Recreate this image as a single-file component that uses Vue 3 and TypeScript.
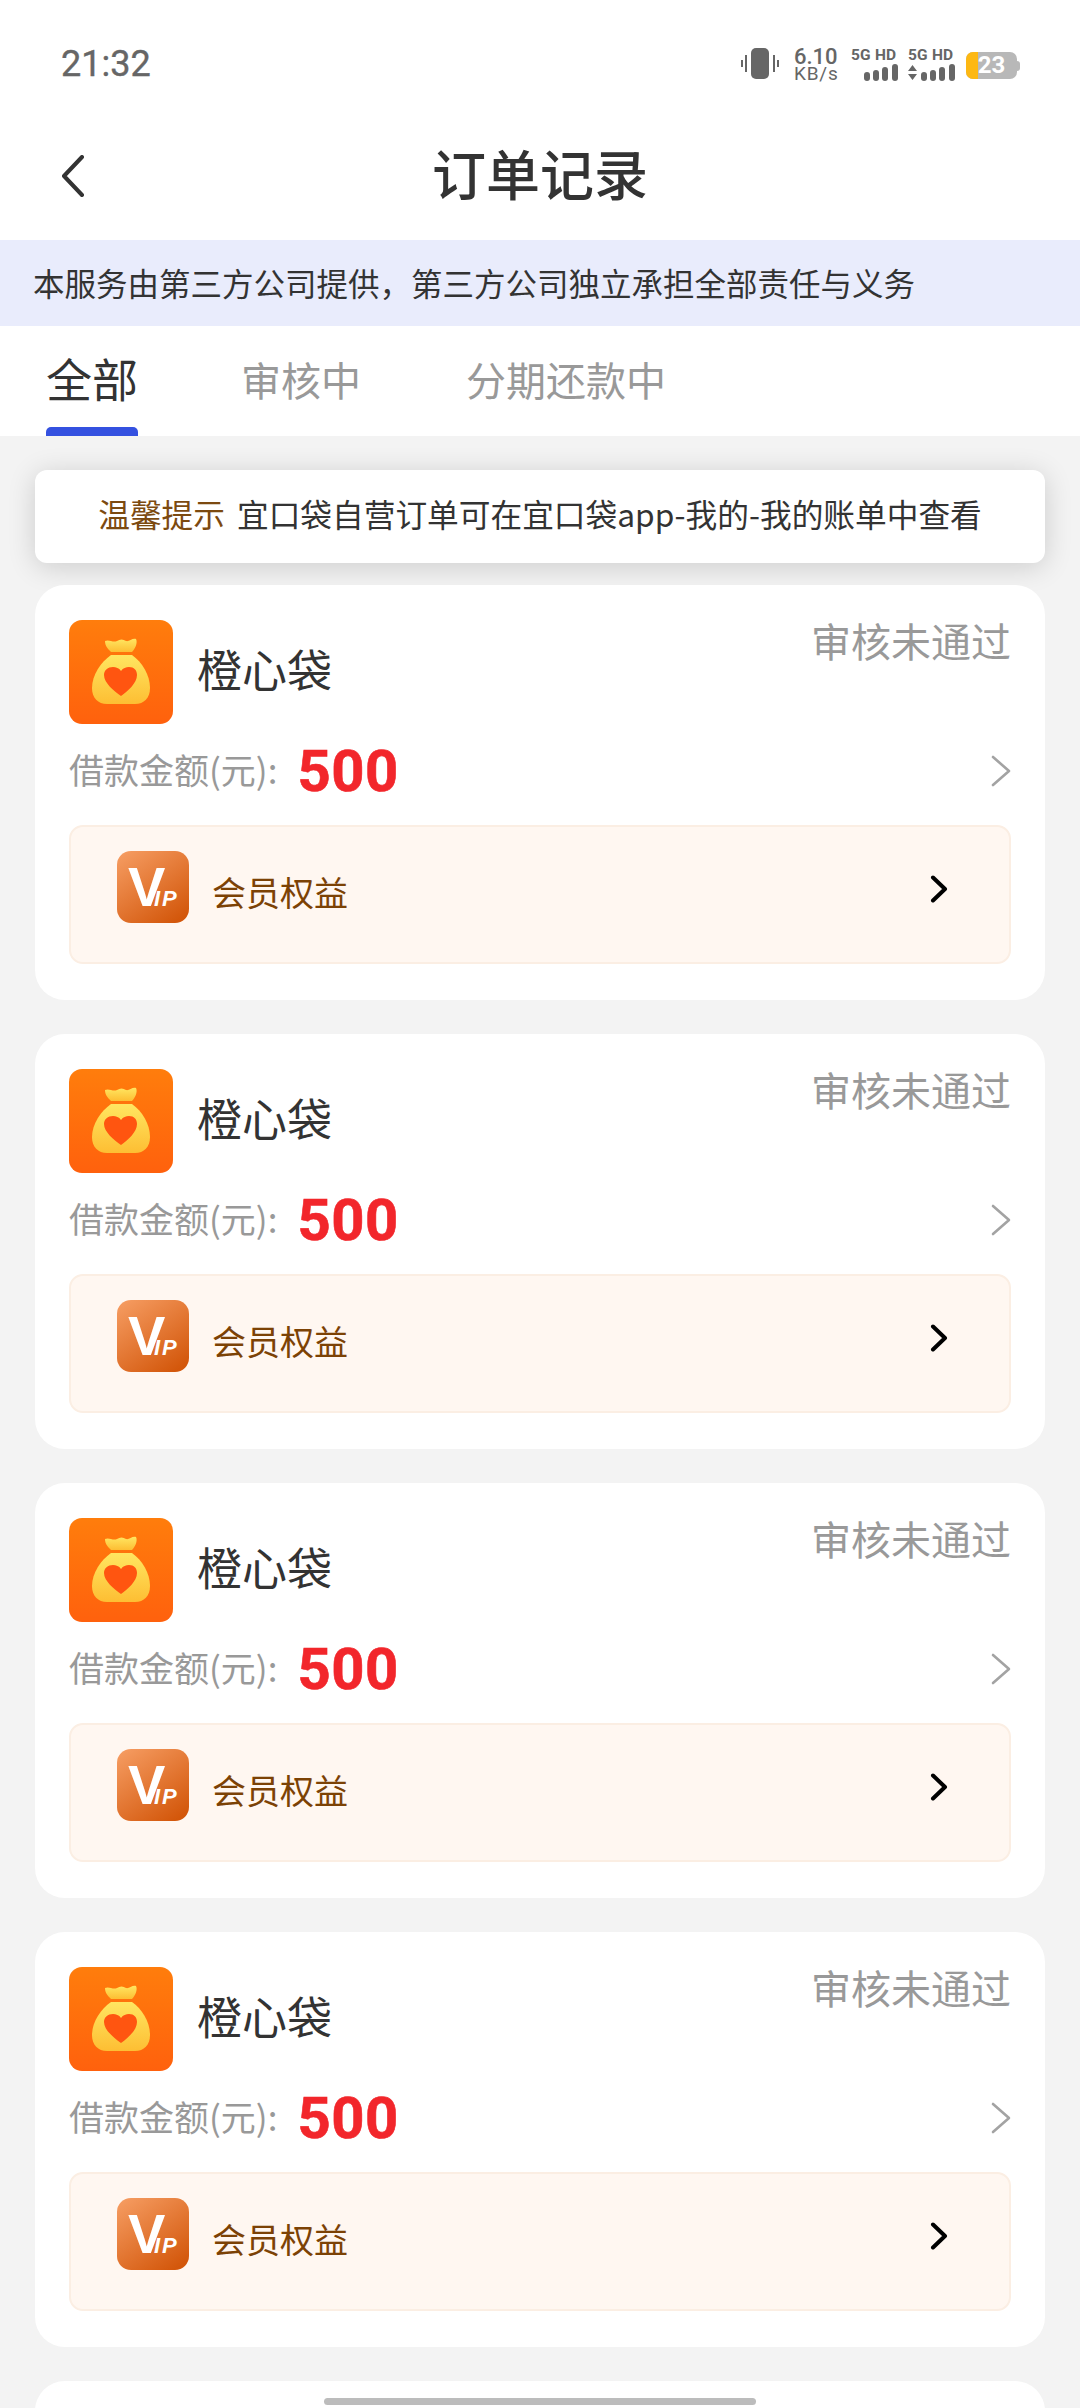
<script setup lang="ts">
const cards: number[] = [1, 2, 3, 4, 5]
</script>

<template>
  <div class="page">
    <div class="status">
      <span class="time">21:32</span>
      <div class="sys">
        <svg class="vib" width="38" height="34" viewBox="0 0 38 34">
          <rect x="10" y="0" width="18" height="31" rx="5" fill="#666" />
          <path d="M5 7v17M1 12v7M33 7v17M37 12v7" stroke="#666" stroke-width="2" fill="none" />
        </svg>
        <div class="speed"><span>6.10</span><span class="kb">KB/s</span></div>
        <div class="sim">
          <span class="hd">5G HD</span>
          <svg width="48" height="17" viewBox="0 0 48 17">
            <g fill="#666">
              <rect x="13" y="8" width="6" height="9" rx="3" />
              <rect x="22" y="6" width="6" height="11" rx="3" />
              <rect x="31" y="3" width="6" height="14" rx="3" />
              <rect x="41" y="0" width="6" height="17" rx="3" />
            </g>
          </svg>
        </div>
        <div class="sim">
          <span class="hd">5G HD</span>
          <svg width="48" height="17" viewBox="0 0 48 17">
            <g fill="#666">
              <path d="M0 7L4.500 1L9 7zM0 10L4.500 16L9 10z" />
              <rect x="13" y="8" width="6" height="9" rx="3" />
              <rect x="22" y="6" width="6" height="11" rx="3" />
              <rect x="31" y="3" width="6" height="14" rx="3" />
              <rect x="41" y="0" width="6" height="17" rx="3" />
            </g>
          </svg>
        </div>
        <div class="battery">
          <div class="batt-body"><i class="batt-fill"></i><span>23</span></div>
          <i class="batt-tip"></i>
        </div>
      </div>
    </div>

    <div class="nav">
      <svg class="back" width="24" height="42" viewBox="0 0 24 42">
        <path d="M21 2L3 21L21 40" fill="none" stroke="#333" stroke-width="4" stroke-linecap="round" stroke-linejoin="round" />
      </svg>
      <h1>订单记录</h1>
    </div>

    <div class="notice">本服务由第三方公司提供，第三方公司独立承担全部责任与义务</div>

    <div class="tabs">
      <div class="tab active">全部<i></i></div>
      <div class="tab">审核中</div>
      <div class="tab">分期还款中</div>
    </div>

    <div class="list">
      <div class="tip"><em>温馨提示</em><span>宜口袋自营订单可在宜口袋app-我的-我的账单中查看</span></div>

      <div v-for="c in cards" :key="c" class="card">
        <template v-if="c < 5">
          <div class="head">
            <svg class="logo" width="104" height="104" viewBox="0 0 104 104">
              <defs>
                <linearGradient :id="'bg' + c" x1="0" y1="0" x2="0" y2="1">
                  <stop offset="0" stop-color="#ff7d0c" />
                  <stop offset="1" stop-color="#ff610d" />
                </linearGradient>
                <linearGradient :id="'bag' + c" x1="0" y1="0" x2="0" y2="1">
                  <stop offset="0" stop-color="#ffe661" />
                  <stop offset="1" stop-color="#fdbe33" />
                </linearGradient>
              </defs>
              <rect width="104" height="104" rx="13" :fill="'url(#bg' + c + ')'" />
              <path d="M36 21C40 19 44 23 48 21C51 19 54 19 57 21C60 22 63 18 67 19C69 23 66 29 63 32H42C39 29 36 26 36 21Z" :fill="'url(#bag' + c + ')'" />
              <path d="M42 35H63C73 42 81 55 81 68C81 78 75 84 66 84H38C29 84 23 78 23 68C23 55 32 42 42 35Z" :fill="'url(#bag' + c + ')'" />
              <path d="M52 76C45 71 35 63 35 55C35 50 39 47 44 47C47 47 50 48 52 51C54 48 57 47 60 47C65 47 68 50 68 55C68 63 59 71 52 76Z" fill="#ff5510" />
            </svg>
            <span class="name">橙心袋</span>
            <span class="state">审核未通过</span>
          </div>
          <div class="amount">
            <span class="label">借款金额(元):</span>
            <span class="num">500</span>
            <svg class="more" width="20" height="32" viewBox="0 0 20 32">
              <path d="M2 2L18 16L2 30" fill="none" stroke="#a3a3a3" stroke-width="2.600" stroke-linecap="round" stroke-linejoin="round" />
            </svg>
          </div>
          <div class="benefit">
            <svg class="vip" width="72" height="72" viewBox="0 0 72 72">
              <defs>
                <linearGradient :id="'vip' + c" x1="0.100" y1="0" x2="0.800" y2="1">
                  <stop offset="0" stop-color="#f59b60" />
                  <stop offset="1" stop-color="#d3570b" />
                </linearGradient>
              </defs>
              <rect width="72" height="72" rx="14" :fill="'url(#vip' + c + ')'" />
              <text x="11" y="55" class="vip-v">V<tspan x="37" class="vip-ip">IP</tspan></text>
            </svg>
            <span class="benefit-text">会员权益</span>
            <svg class="go" width="18" height="28" viewBox="0 0 18 28">
              <path d="M3 2.500L15 14L3 25.500" fill="none" stroke="#000" stroke-width="4" stroke-linecap="round" stroke-linejoin="round" />
            </svg>
          </div>
        </template>
      </div>
    </div>

    <i class="home"></i>
  </div>
</template>

<style>
html, body { margin: 0; background: #f3f3f3; }
</style>

<style scoped>
.page {
  position: relative;
  width: 1080px;
  height: 2408px;
  overflow: hidden;
  background: #f3f3f3;
  font-family: "Noto Sans CJK SC", "Noto Sans", sans-serif;
}
.status {
  height: 120px;
  box-sizing: border-box;
  padding: 40px 60px 0 61px;
  background: #fff;
  display: flex;
  justify-content: space-between;
  align-items: flex-start;
}
.time {
  font: 400 36px/48px Roboto, sans-serif;
  color: #666;
  -webkit-text-stroke: 0.4px #666;
}
.sys {
  display: flex;
  align-items: flex-start;
  padding-top: 8px;
}
.speed {
  display: flex;
  flex-direction: column;
  margin-left: 15px;
  width: 57px;
  font: 500 22px/17px Roboto, sans-serif;
  color: #666;
}
.speed .kb { font-size: 19px; letter-spacing: 0.8px; font-weight: 400; }
.sim {
  width: 48px;
  margin-right: 9px;
  display: flex;
  flex-direction: column;
  gap: 2px;
}
.hd {
  font: 700 15.500px/14px Roboto, sans-serif;
  color: #666;
  white-space: nowrap;
  letter-spacing: 0.2px;
}
.battery {
  display: flex;
  align-items: center;
  margin: 4px 0 0 1px;
}
.batt-body {
  position: relative;
  width: 51px;
  height: 27px;
  border-radius: 7px;
  background: #b8b8b8;
  overflow: hidden;
  display: flex;
  align-items: center;
  justify-content: center;
}
.batt-fill {
  position: absolute;
  left: 0;
  top: 0;
  bottom: 0;
  width: 12px;
  background: #fdb813;
}
.batt-body span {
  position: relative;
  font: 700 24px/27px Roboto, sans-serif;
  color: #fff;
}
.batt-tip {
  width: 3px;
  height: 10px;
  border-radius: 0 3px 3px 0;
  background: #b8b8b8;
}
.nav {
  position: relative;
  height: 120px;
  background: #fff;
  display: flex;
  align-items: center;
  justify-content: center;
}
.back {
  position: absolute;
  left: 61px;
  top: 35px;
}
h1 {
  margin: 0 0 14px;
  font-size: 54px;
  line-height: 72px;
  font-weight: 500;
  color: #333;
}
.notice {
  height: 86px;
  box-sizing: border-box;
  padding-left: 33px;
  background: #e9ecfc;
  color: #333;
  font-size: 31.500px;
  line-height: 84px;
  white-space: nowrap;
}
.tabs {
  height: 110px;
  box-sizing: border-box;
  background: #fff;
  display: flex;
  padding: 26px 0 0 46px;
}
.tab {
  position: relative;
  height: 84px;
  margin-right: 104px;
  font-size: 40px;
  line-height: 54px;
  color: #999;
}
.tab:last-child { margin-left: 1px; }
.tab.active {
  font-size: 46px;
  line-height: 50px;
  color: #333;
  margin-right: 103px;
}
.tab.active i {
  position: absolute;
  left: 0;
  right: 0;
  bottom: 0;
  height: 9px;
  border-radius: 5px 5px 0 0;
  background: #3451e0;
}
.list {
  padding: 34px 35px 0;
  display: flex;
  flex-direction: column;
  gap: 34px;
}
.tip {
  height: 93px;
  box-sizing: border-box;
  padding-bottom: 8px;
  margin-bottom: -12px;
  flex-shrink: 0;
  background: #fff;
  border-radius: 12px;
  box-shadow: 0 4px 28px rgba(0, 0, 0, 0.16);
  display: flex;
  align-items: center;
  justify-content: center;
  gap: 12px;
  font-size: 31.700px;
  color: #333;
  white-space: nowrap;
}
.tip em { font-style: normal; color: #7c4a10; }
.card {
  flex-shrink: 0;
  height: 415px;
  box-sizing: border-box;
  padding: 35px 34px 0;
  background: #fff;
  border-radius: 30px;
}
.head {
  height: 104px;
  display: flex;
  align-items: center;
}
.logo { flex-shrink: 0; }
.name {
  margin: 0 0 8px 24px;
  font-size: 45px;
  color: #333;
}
.state {
  margin-left: auto;
  align-self: flex-start;
  font-size: 40px;
  line-height: 40px;
  color: #999;
}
.amount {
  height: 94px;
  display: flex;
  align-items: center;
  margin-bottom: 7px;
}
.label { font-size: 35px; color: #999; margin-bottom: 6px; }
.num {
  margin-left: 20px;
  font: 700 58px/94px Roboto, sans-serif;
  color: #f2262b;
  -webkit-text-stroke: 0.6px #f2262b;
  letter-spacing: 0.5px;
}
.more { margin-left: auto; }
.benefit {
  height: 139px;
  box-sizing: border-box;
  padding: 0 61px 0 46px;
  display: flex;
  align-items: center;
  background: #fff7f1;
  border: 2px solid #fbeee3;
  border-radius: 14px;
}
.vip { margin-top: -16px; flex-shrink: 0; }
.benefit-text {
  margin: 0 0 6px 23px;
  font-size: 34px;
  color: #7c4205;
}
.go { margin-left: auto; margin-top: -12px; }
.vip-v {
  font: 700 56px "Liberation Sans", sans-serif;
  fill: #fff;
}
.vip-ip {
  font: italic 700 22px "Liberation Sans", sans-serif;
  letter-spacing: 2px;
  fill: #fff;
}
.home {
  position: absolute;
  left: 324px;
  top: 2398px;
  width: 432px;
  height: 7px;
  border-radius: 4px;
  background: #bcbcbc;
}
</style>
